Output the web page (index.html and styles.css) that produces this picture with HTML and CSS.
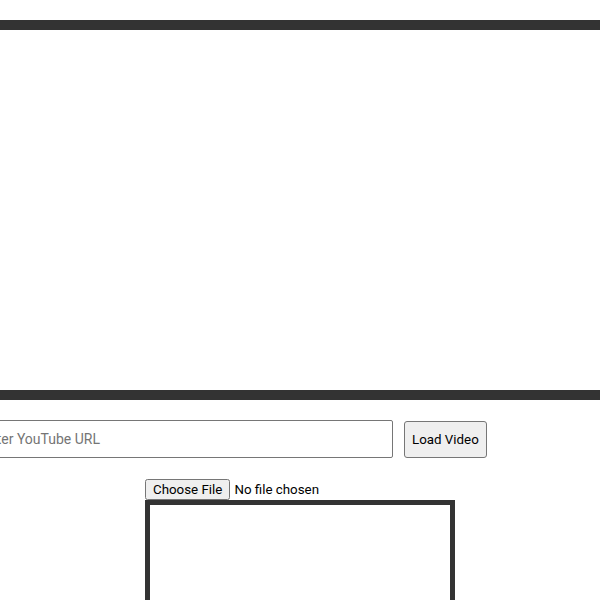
FILE: index.html
```html
<!DOCTYPE html>
<html>
<head>
<meta charset="utf-8">
<link rel="stylesheet" href="styles.css">
</head>
<body>
<div class="app">
  <div class="player"></div>
  <div class="controls">
    <input class="url-input" type="text" placeholder="Enter YouTube URL">
    <button class="load-btn">Load Video</button>
  </div>
  <div class="drawing">
    <input class="file-input" type="file">
    <div class="canvas-box"></div>
  </div>
</div>
</body>
</html>
```
FILE: styles.css
```css
html, body {
  margin: 0;
  padding: 0;
  background: #ffffff;
  font-family: Roboto, "Liberation Sans", Arial, sans-serif;
}
.app {
  display: flex;
  flex-direction: column;
  align-items: center;
  padding-top: 20px;
}
.player {
  flex: none;
  width: 640px;
  height: 360px;
  border: 10px solid #333333;
  background: #ffffff;
}
.controls {
  flex: none;
  width: 660px;
  margin-top: 20px;
  display: flex;
  align-items: center;
  gap: 11px;
}
.url-input {
  box-sizing: content-box;
  width: 401px;
  padding: 10px;
  font-family: Roboto, "Liberation Sans", Arial, sans-serif;
  font-size: 14px;
  border: 1px solid #767676;
  border-radius: 2px;
  margin: 0;
}
.url-input::placeholder {
  color: #757575;
}
.load-btn {
  margin: 0;
  padding: 10px 7px;
  font-family: Roboto, "Liberation Sans", Arial, sans-serif;
  font-size: 13.333px;
  color: #000;
  background: #efefef;
  border: 1px solid #767676;
  border-radius: 3px;
}
.drawing {
  flex: none;
  width: 310px;
  margin-top: 21px;
  display: flex;
  flex-direction: column;
  align-items: flex-start;
}
.file-input {
  margin: 0;
  font-family: Roboto, "Liberation Sans", Arial, sans-serif;
  font-size: 13.333px;
}
.file-input::file-selector-button {
  font-family: Roboto, "Liberation Sans", Arial, sans-serif;
  font-size: 13.333px;
}
.canvas-box {
  width: 300px;
  height: 200px;
  border: 5px solid #333333;
  background: #ffffff;
}
```
